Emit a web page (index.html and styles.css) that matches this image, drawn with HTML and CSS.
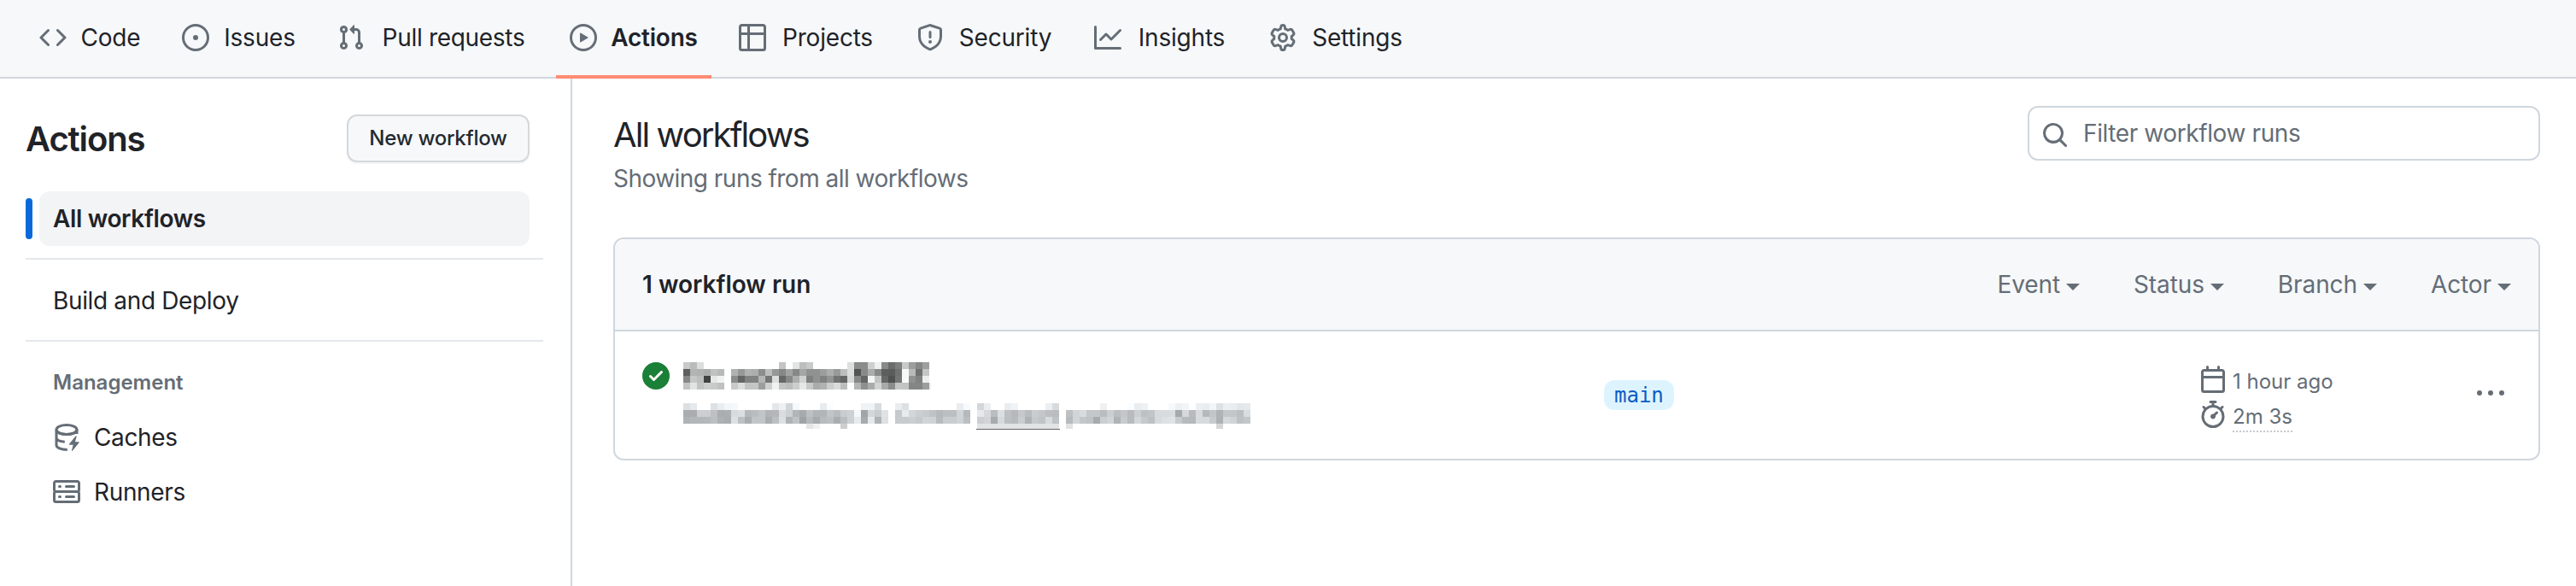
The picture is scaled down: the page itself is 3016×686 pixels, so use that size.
FILE: index.html
```html
<!DOCTYPE html>
<html lang="en">

<head>
    <meta charset="UTF-8" />
    <meta name="viewport" content="width=device-width, initial-scale=1" />
    <title>Workflow runs</title>
    <link rel="stylesheet" href="styles.css">
</head>

<body>
    <nav class="repo-nav">
        <a class="nav-item nav-code">
            <svg class="icon" viewBox="0 0 16 16"><path d="m11.28 3.22 4.25 4.25a.75.75 0 0 1 0 1.06l-4.25 4.25a.749.749 0 0 1-1.275-.326.749.749 0 0 1 .215-.734L13.94 8l-3.72-3.72a.749.749 0 0 1 .326-1.275.749.749 0 0 1 .734.215Zm-6.56 0a.751.751 0 0 1 1.042.018.751.751 0 0 1 .018 1.042L2.06 8l3.72 3.72a.749.749 0 0 1-.326 1.275.749.749 0 0 1-.734-.215L.47 8.53a.75.75 0 0 1 0-1.06Z"/></svg>
            <span>Code</span>
        </a>
        <a class="nav-item nav-issues">
            <svg class="icon" viewBox="0 0 16 16"><path d="M8 9.5a1.5 1.5 0 1 0 0-3 1.5 1.5 0 0 0 0 3Z"/><path d="M8 0a8 8 0 1 1 0 16A8 8 0 0 1 8 0ZM1.5 8a6.5 6.5 0 1 0 13 0 6.5 6.5 0 0 0-13 0Z"/></svg>
            <span>Issues</span>
        </a>
        <a class="nav-item nav-pulls">
            <svg class="icon" viewBox="0 0 16 16"><path d="M1.5 3.25a2.25 2.25 0 1 1 3 2.122v5.256a2.251 2.251 0 1 1-1.5 0V5.372A2.25 2.25 0 0 1 1.5 3.25Zm5.677-.177L9.573.677A.25.25 0 0 1 10 .854V2.5h1A2.5 2.5 0 0 1 13.5 5v5.628a2.251 2.251 0 1 1-1.5 0V5a1 1 0 0 0-1-1h-1v1.646a.25.25 0 0 1-.427.177L7.177 3.427a.25.25 0 0 1 0-.354ZM3.75 2.5a.75.75 0 1 0 0 1.5.75.75 0 0 0 0-1.5Zm0 9.5a.75.75 0 1 0 0 1.5.75.75 0 0 0 0-1.5Zm8.25.75a.75.75 0 1 0 1.5 0 .75.75 0 0 0-1.5 0Z"/></svg>
            <span>Pull requests</span>
        </a>
        <a class="nav-item nav-actions selected">
            <svg class="icon" viewBox="0 0 16 16"><path d="M8 0a8 8 0 1 1 0 16A8 8 0 0 1 8 0ZM1.5 8a6.5 6.5 0 1 0 13 0 6.5 6.5 0 0 0-13 0Zm4.879-2.773 4.264 2.559a.25.25 0 0 1 0 .428l-4.264 2.559A.25.25 0 0 1 6 10.559V5.442a.25.25 0 0 1 .379-.215Z"/></svg>
            <span>Actions</span>
        </a>
        <a class="nav-item nav-projects">
            <svg class="icon" viewBox="0 0 16 16"><path d="M0 1.75C0 .784.784 0 1.75 0h12.5C15.216 0 16 .784 16 1.75v12.5A1.75 1.75 0 0 1 14.25 16H1.75A1.75 1.75 0 0 1 0 14.25ZM6.5 6.5v8h7.75a.25.25 0 0 0 .25-.25V6.5Zm8-1.5V1.75a.25.25 0 0 0-.25-.25H6.5V5Zm-13 1.5v7.75c0 .138.112.25.25.25H5v-8ZM5 5V1.5H1.75a.25.25 0 0 0-.25.25V5Z"/></svg>
            <span>Projects</span>
        </a>
        <a class="nav-item nav-security">
            <svg class="icon" viewBox="0 0 16 16"><path d="M7.467.133a1.748 1.748 0 0 1 1.066 0l5.25 1.68A1.75 1.75 0 0 1 15 3.48V7c0 1.566-.32 3.182-1.303 4.682-.983 1.498-2.585 2.813-5.032 3.855a1.697 1.697 0 0 1-1.33 0c-2.447-1.042-4.049-2.357-5.032-3.855C1.32 10.182 1 8.566 1 7V3.48a1.75 1.75 0 0 1 1.217-1.667Zm.61 1.429a.25.25 0 0 0-.153 0l-5.25 1.68a.25.25 0 0 0-.174.238V7c0 1.358.275 2.666 1.057 3.86.784 1.194 2.121 2.34 4.366 3.297a.196.196 0 0 0 .154 0c2.245-.956 3.582-2.104 4.366-3.298C13.225 9.666 13.5 8.36 13.5 7V3.48a.251.251 0 0 0-.174-.237l-5.25-1.68ZM8.75 4.75v3a.75.75 0 0 1-1.5 0v-3a.75.75 0 0 1 1.5 0ZM9 10.5a1 1 0 1 1-2 0 1 1 0 0 1 2 0Z"/></svg>
            <span>Security</span>
        </a>
        <a class="nav-item nav-insights">
            <svg class="icon" viewBox="0 0 16 16"><path d="M1.5 1.75V13.5h13.75a.75.75 0 0 1 0 1.5H.75a.75.75 0 0 1-.75-.75V1.75a.75.75 0 0 1 1.5 0Zm14.28 2.53-5.25 5.25a.75.75 0 0 1-1.06 0L7 7.06 4.28 9.78a.751.751 0 0 1-1.042-.018.751.751 0 0 1-.018-1.042l3.25-3.25a.75.75 0 0 1 1.06 0L10 7.94l4.72-4.72a.751.751 0 0 1 1.042.018.751.751 0 0 1 .018 1.042Z"/></svg>
            <span>Insights</span>
        </a>
        <a class="nav-item nav-settings">
            <svg class="icon" viewBox="0 0 16 16"><path class="line" d="M6.9 1.5Q7 .75 8 .75T9.1 1.5L9.4 2.9Q10.2 3.2 10.9 3.7L12.3 3.2Q13.1 3 13.5 3.7L14.3 5.1Q14.7 5.9 14.1 6.4L13.1 7.3Q13.2 8 13.1 8.7L14.1 9.6Q14.7 10.1 14.3 10.9L13.5 12.3Q13.1 13 12.3 12.8L10.9 12.3Q10.2 12.8 9.4 13.1L9.1 14.5Q9 15.25 8 15.25T6.9 14.5L6.6 13.1Q5.8 12.8 5.1 12.3L3.7 12.8Q2.9 13 2.5 12.3L1.7 10.9Q1.3 10.1 1.9 9.6L2.9 8.7Q2.8 8 2.9 7.3L1.9 6.4Q1.3 5.9 1.7 5.1L2.5 3.7Q2.9 3 3.7 3.2L5.1 3.7Q5.8 3.2 6.6 2.9Z"/><circle class="line" cx="8" cy="8" r="2.25"/></svg>
            <span>Settings</span>
        </a>
    </nav>

    <div class="layout">
        <aside class="sidebar">
            <div class="sidebar-head">
                <h2>Actions</h2>
                <button class="btn">New workflow</button>
            </div>
            <div class="side-row current">
                <a class="side-link">All workflows</a>
            </div>
            <hr />
            <a class="side-link plain">Build and Deploy</a>
            <hr />
            <h3>Management</h3>
            <a class="side-link plain">
                <svg class="icon" viewBox="0 0 16 16"><ellipse class="line" cx="8" cy="3.5" rx="6" ry="2.75"/><path class="line" d="M2 3.5V12.5C2 14 4.6 15.2 8.4 15.25M2 8C2 9.4 4 10.4 6.9 10.6M14 3.5C14 5.2 11.2 6.3 8 6.3S2 5.2 2 3.5M14 3.5V6"/><path d="M13.3 7.3 9.6 11.8a.35.35 0 0 0 .3.6h1.9l-.8 3.2c-.1.4.3.5.5.2l3.7-4.6a.35.35 0 0 0-.3-.6H13l.8-3c.1-.4-.3-.6-.5-.3Z"/></svg>
                <span>Caches</span>
            </a>
            <a class="side-link plain">
                <svg class="icon" viewBox="0 0 16 16"><path d="M1.75 1h12.5c.966 0 1.75.784 1.75 1.75v4c0 .372-.116.717-.314 1 .198.283.314.628.314 1v4a1.75 1.75 0 0 1-1.75 1.75H1.75A1.75 1.75 0 0 1 0 12.75v-4c0-.358.109-.707.314-1a1.739 1.739 0 0 1-.314-1v-4C0 1.784.784 1 1.75 1ZM1.5 2.75v4c0 .138.112.25.25.25h12.5a.25.25 0 0 0 .25-.25v-4a.25.25 0 0 0-.25-.25H1.75a.25.25 0 0 0-.25.25Zm.25 5.75a.25.25 0 0 0-.25.25v4c0 .138.112.25.25.25h12.5a.25.25 0 0 0 .25-.25v-4a.25.25 0 0 0-.25-.25ZM7 4.75A.75.75 0 0 1 7.75 4h4.5a.75.75 0 0 1 0 1.5h-4.5A.75.75 0 0 1 7 4.75ZM7.75 10h4.5a.75.75 0 0 1 0 1.5h-4.5a.75.75 0 0 1 0-1.5ZM3 4.75A.75.75 0 0 1 3.75 4h.5a.75.75 0 0 1 0 1.5h-.5A.75.75 0 0 1 3 4.75ZM3.75 10h.5a.75.75 0 0 1 0 1.5h-.5a.75.75 0 0 1 0-1.5Z"/></svg>
                <span>Runners</span>
            </a>
        </aside>

        <main class="content">
            <div class="content-head">
                <div>
                    <h1>All workflows</h1>
                    <p class="subtitle">Showing runs from all workflows</p>
                </div>
                <div class="search">
                    <svg class="icon" viewBox="0 0 16 16"><path d="M10.68 11.74a6 6 0 0 1-7.922-8.982 6 6 0 0 1 8.982 7.922l3.04 3.04a.749.749 0 0 1-.326 1.275.749.749 0 0 1-.734-.215ZM11.5 7a4.499 4.499 0 1 0-8.997 0A4.499 4.499 0 0 0 11.5 7Z"/></svg>
                    <span>Filter workflow runs</span>
                </div>
            </div>

            <section class="box">
                <header class="box-header">
                    <strong>1 workflow run</strong>
                    <div class="filters">
                        <span class="filter">Event</span>
                        <span class="filter">Status</span>
                        <span class="filter">Branch</span>
                        <span class="filter">Actor</span>
                    </div>
                </header>
                <div class="run">
                    <svg class="icon success" viewBox="0 0 16 16"><path d="M8 16A8 8 0 1 1 8 0a8 8 0 0 1 0 16Zm3.78-9.72a.751.751 0 0 0-.018-1.042.751.751 0 0 0-1.042-.018L6.75 9.19 5.28 7.72a.751.751 0 0 0-1.042.018.751.751 0 0 0-.018 1.042l2 2a.75.75 0 0 0 1.06 0Z"/></svg>
                    <div class="run-text">
                        <svg class="mosaic" id="runTitle" width="292" height="32"></svg>
                        <svg class="mosaic" id="runMeta" width="664" height="32"></svg>
                    </div>
                    <div class="run-branch"><span class="branch">main</span></div>
                    <div class="run-times">
                        <div class="time">
                            <svg class="icon" viewBox="0 0 16 16"><path d="M4.75 0a.75.75 0 0 1 .75.75V2h5V.75a.75.75 0 0 1 1.5 0V2h1.25c.966 0 1.75.784 1.75 1.75v10.5A1.75 1.75 0 0 1 13.25 16H2.75A1.75 1.75 0 0 1 1 14.25V3.75C1 2.784 1.784 2 2.75 2H4V.75A.75.75 0 0 1 4.75 0ZM2.5 7.5v6.75c0 .138.112.25.25.25h10.5a.25.25 0 0 0 .25-.25V7.5Zm10.75-4H2.75a.25.25 0 0 0-.25.25V6h11V3.75a.25.25 0 0 0-.25-.25Z"/></svg>
                            <span>1 hour ago</span>
                        </div>
                        <div class="time">
                            <svg class="icon" viewBox="0 0 16 16"><path d="M5.75.75A.75.75 0 0 1 6.5 0h3a.75.75 0 0 1 0 1.5h-.75v1l-.001.041a6.724 6.724 0 0 1 3.464 1.435l.007-.006.75-.75a.749.749 0 0 1 1.275.326.749.749 0 0 1-.215.734l-.75.75-.006.007a6.75 6.75 0 1 1-10.548 0L2.72 5.03l-.75-.75a.751.751 0 0 1 .018-1.042.751.751 0 0 1 1.042-.018l.75.75.007.006A6.72 6.72 0 0 1 7.25 2.541V1.5H6.5a.75.75 0 0 1-.75-.75ZM8 14.5a5.25 5.25 0 1 0-.001-10.501A5.25 5.25 0 0 0 8 14.5Zm.389-6.7 1.33-1.33a.75.75 0 1 1 1.061 1.06L9.45 8.861A1.503 1.503 0 0 1 8 10.75a1.499 1.499 0 1 1 .389-2.95Z"/></svg>
                            <span class="duration">2m 3s</span>
                        </div>
                    </div>
                    <svg class="icon kebab" viewBox="0 0 16 16"><path d="M8 9a1.5 1.5 0 1 0 0-3 1.5 1.5 0 0 0 0 3ZM1.5 9a1.5 1.5 0 1 0 0-3 1.5 1.5 0 0 0 0 3Zm13 0a1.5 1.5 0 1 0 0-3 1.5 1.5 0 0 0 0 3Z"/></svg>
                </div>
            </section>
        </main>
    </div>

    <script src="mosaic.js"></script>
</body>

</html>
```
FILE: styles.css
```css
:root {
    --fg: #1f2328;
    --muted: #656d76;
    --border: #d0d7de;
    --subtle: #f6f8fa;
}

* {
    box-sizing: border-box;
}

body {
    margin: 0;
    height: 686px;
    overflow: hidden;
    display: flex;
    flex-direction: column;
    background: #fff;
    color: var(--fg);
    font-family: Inter, "Liberation Sans", sans-serif;
    font-size: 28px;
    line-height: 42px;
}

h1, h2, h3, p {
    margin: 0;
}

.icon {
    width: 32px;
    height: 32px;
    flex: none;
    display: block;
    fill: var(--muted);
}

.line {
    fill: none;
    stroke: var(--muted);
    stroke-width: 1.5;
}

/* top navigation */
.repo-nav {
    flex: none;
    display: flex;
    gap: 16px;
    height: 92px;
    padding-left: 30px;
    background: var(--subtle);
    border-bottom: 2px solid var(--border);
}

.nav-item {
    display: flex;
    align-items: center;
    gap: 16px;
    height: 92px;
    padding: 0 16px 4px;
    letter-spacing: -0.2px;
    white-space: nowrap;
}

.nav-item span {
    display: flex;
    justify-content: center;
    flex: 1;
}

.nav-item.selected {
    padding-bottom: 0;
    border-bottom: 4px solid #fd8c73;
    font-weight: 600;
}

.nav-code { width: 151px; }
.nav-issues { width: 166px; }
.nav-pulls { width: 256px; letter-spacing: -0.3px; }
.nav-actions { width: 182px; }
.nav-projects { width: 192px; }
.nav-security { width: 192px; }
.nav-insights { width: 189px; }
.nav-settings { width: 190px; }

.layout {
    flex: 1;
    display: flex;
}

/* sidebar */
.sidebar {
    width: 670px;
    padding: 42px 32px 0 30px;
    border-right: 2px solid var(--border);
}

.sidebar-head {
    display: flex;
    justify-content: space-between;
    align-items: center;
    height: 56px;
    margin: 0 16px 34px 0;
}

.sidebar-head h2 {
    padding-top: 2px;
    font-size: 40px;
    font-weight: 600;
    letter-spacing: -1.1px;
}

.btn {
    width: 214px;
    height: 56px;
    padding: 0;
    border: 2px solid #d5d8db;
    border-radius: 12px;
    background: var(--subtle);
    box-shadow: 0 2px 0 rgba(31, 35, 40, 0.04);
    color: #24292f;
    font: 500 24px/40px Inter, sans-serif;
    letter-spacing: -0.25px;
    white-space: nowrap;
}

.side-row {
    display: flex;
    align-items: center;
    gap: 8px;
    margin-right: 16px;
}

.current::before {
    content: "";
    width: 8px;
    height: 48px;
    border-radius: 12px;
    background: #0969da;
}

.current .side-link {
    flex: 1;
    border-radius: 12px;
    background: #f3f4f6;
    font-weight: 600;
}

.side-link {
    display: flex;
    align-items: center;
    gap: 16px;
    height: 64px;
    padding: 0 16px;
    letter-spacing: -0.35px;
}

.plain {
    margin-left: 16px;
}

.sidebar hr {
    height: 2px;
    margin: 14px 0 16px;
    border: 0;
    background: #e5e8eb;
}

.sidebar h3 {
    height: 64px;
    padding-left: 32px;
    line-height: 64px;
    color: var(--muted);
    font-size: 24px;
    font-weight: 600;
}

/* runs list */
.content {
    flex: 1;
    padding: 32px 42px 0 48px;
}

.content-head {
    display: flex;
    justify-content: space-between;
    height: 154px;
}

.content-head h1 {
    padding-top: 4px;
    font-size: 40px;
    font-weight: 400;
    letter-spacing: -1.9px;
    line-height: 60px;
}

.subtitle {
    color: var(--muted);
    letter-spacing: -0.53px;
}

.search {
    display: flex;
    align-items: center;
    gap: 17px;
    width: 600px;
    height: 64px;
    padding: 0 16px 0 14px;
    border: 2px solid var(--border);
    border-radius: 12px;
    color: var(--muted);
    letter-spacing: -0.4px;
}

.search .icon {
    margin-top: 4px;
}

.box {
    height: 261px;
    border: 2px solid var(--border);
    border-radius: 12px;
    overflow: hidden;
}

.box-header {
    display: flex;
    justify-content: space-between;
    align-items: center;
    height: 108px;
    padding: 0 32px;
    background: var(--subtle);
    border-bottom: 2px solid var(--border);
}

.box-header strong {
    font-weight: 600;
}

.filters {
    display: flex;
    gap: 63px;
    color: var(--muted);
    letter-spacing: -0.1px;
}

.filter {
    display: flex;
    align-items: center;
    gap: 7px;
}

.filter::after {
    content: "";
    margin-top: 6px;
    border: 8px solid transparent;
    border-top-color: currentColor;
    border-bottom: 0;
}

.run {
    display: flex;
    padding: 36px 40px 0 32px;
}

.run .success {
    fill: #1a7f37;
}

.run-text {
    display: flex;
    flex-direction: column;
    gap: 16px;
    width: 1094px;
    padding-left: 16px;
}

.mosaic {
    display: block;
    shape-rendering: crispEdges;
}

.run-branch {
    display: flex;
    align-items: flex-start;
    width: 697px;
    padding-top: 21px;
}

.branch {
    height: 35px;
    padding: 0 12px;
    border-radius: 12px;
    background: #ddf4ff;
    color: #0a5cc5;
    font: 24px/36px "DejaVu Sans Mono", monospace;
}

.run-times {
    flex: 1;
    display: flex;
    flex-direction: column;
    gap: 9px;
    padding-top: 4px;
    color: var(--muted);
    font-size: 24px;
}

.time {
    display: flex;
    align-items: center;
    gap: 7px;
    height: 32px;
}

.time span {
    height: 36px;
    margin-top: 5px;
    line-height: 36px;
}

.duration {
    border-bottom: 2px dotted #c4c9ce;
}

.kebab {
    margin-top: 21px;
}
```
FILE: mosaic.js
```js
// Redacted run title and description: one grey level per 8px cell, "--" is empty
const titleRows = [
    'c8 ba dc -- -- -- -- -- -- -- -- -- -- -- c3 -- e3 bc c8 -- -- -- -- -- dd 8a 8a ce ee 88 6a 7c c8 9c 86 9e',
    '5e b2 b0 aa c0 b8 -- b0 96 b0 ac 8c bc 96 86 a2 86 a4 90 90 9c ac 98 bc dc 52 88 aa 88 5c 5a 70 f6 b8 70 c4',
    '86 c6 bc 40 e6 f0 -- 8a 64 80 80 b4 74 dc 66 86 ac d0 7e 90 80 92 72 64 d6 86 64 f4 c2 66 50 74 f8 90 80 ec',
    'c2 e2 c2 cc c8 c0 -- c8 dc c2 c4 9c ce f0 c2 bc cc e6 c8 aa b0 cc da bc -- b4 8e aa d2 a8 8a c4 c2 84 84 9c'
];

const metaRows = [
    'dc e6 -- -- de ea f3 f5 -- -- -- -- -- e4 ee d2 f6 -- -- -- e8 fa -- -- -- -- f0 f0 d8 -- -- ea dd -- -- -- -- -- -- -- ea f7 -- d4 ea -- -- ea f0 -- -- -- -- ec d8 -- -- -- -- -- -- ee -- -- -- fa ea ee -- -- -- f6 ee f2 -- ec ea f2 de ec ea e4 e6',
    'aa aa cc cc be aa ac d8 dc b6 ba c2 b2 b4 da ce b2 a8 be b2 b2 c2 ba ca ce f5 a2 d4 ca e0 -- c6 e8 d4 cc c8 c0 b6 bc bc d2 b6 -- e6 d6 ba dc be b6 c6 ba ca c4 bc ba -- be d2 d8 c4 c4 ba cc bc c4 b8 cc be c2 d8 d8 da a6 d6 b8 d8 b6 c2 b0 c4 c4 bc da',
    'b0 b4 b4 b6 bc ae aa de be aa c2 c2 aa bc de b0 c0 a0 b6 a8 b8 bc aa bc ce e8 a8 e6 b0 de -- c8 c8 cc c6 d2 d0 b8 ca ca d0 bc -- cc d2 a8 d6 bc b8 ca b0 c6 c0 d8 c0 -- b8 d2 c4 c0 a8 cc d2 b0 c8 b8 d4 c6 be d8 de e0 c8 b8 b6 d8 d8 c8 ae d6 d0 be c4'
];

function addRect(svg, x, y, width, height, fill) {
    const rect = document.createElementNS('http://www.w3.org/2000/svg', 'rect');
    Object.entries({ x, y, width, height, fill }).forEach(([key, value]) => rect.setAttribute(key, value));
    svg.append(rect);
}

function drawRows(svg, rows, tint) {
    rows.forEach((row, r) => {
        row.split(' ').forEach((cell, c) => {
            if (cell === '--') return;
            const grey = parseInt(cell, 16);
            addRect(svg, c * 8, r * 8, 8, 8, `rgb(${grey}, ${grey + tint / 2}, ${Math.min(255, grey + tint)})`);
        });
    });
}

const title = document.getElementById('runTitle');
drawRows(title, titleRows, 1);
addRect(title, 288, 24, 2, 8, '#f0f0f0');

const meta = document.getElementById('runMeta');
drawRows(meta, metaRows, 5);
// descenders below the baseline, then the underlined commit link
addRect(meta, 144, 24, 8, 6, '#e6e4e6');
addRect(meta, 152, 24, 8, 6, '#f2f0f2');
addRect(meta, 184, 24, 8, 6, '#cecece');
addRect(meta, 448, 24, 8, 6, '#e2e2e2');
addRect(meta, 624, 24, 8, 6, '#d6d6d6');
addRect(meta, 344, 24, 96, 6, '#e2e3e4');
addRect(meta, 343, 30, 98, 1, '#656368');
```
